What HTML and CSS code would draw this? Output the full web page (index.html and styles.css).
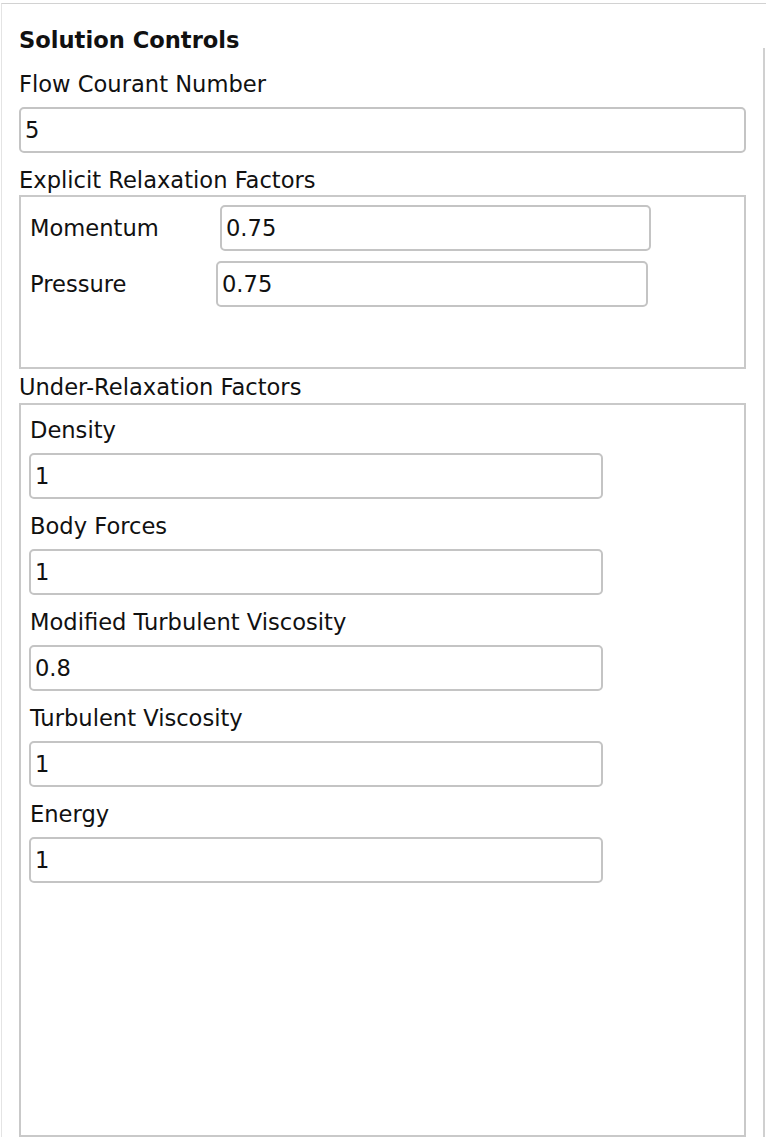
FILE: index.html
```html
<!DOCTYPE html>
<html>
<head>
<meta charset="utf-8">
<link rel="stylesheet" href="styles.css">
</head>
<body>
<div class="frame">
  <div class="panel">
    <div class="title">Solution Controls</div>
    <div class="label first">Flow Courant Number</div>
    <input class="field full" value="5">
    <div class="label group-label">Explicit Relaxation Factors</div>
    <div class="group explicit">
      <div class="row">
        <span class="row-label momentum-label">Momentum</span>
        <input class="field momentum" value="0.75">
      </div>
      <div class="row">
        <span class="row-label pressure-label">Pressure</span>
        <input class="field pressure" value="0.75">
      </div>
    </div>
    <div class="label group-label under-label">Under-Relaxation Factors</div>
    <div class="group under">
      <div class="label">Density</div>
      <input class="field urf" value="1">
      <div class="label">Body Forces</div>
      <input class="field urf" value="1">
      <div class="label">Modified Turbulent Viscosity</div>
      <input class="field urf" value="0.8">
      <div class="label">Turbulent Viscosity</div>
      <input class="field urf" value="1">
      <div class="label">Energy</div>
      <input class="field urf" value="1">
    </div>
  </div>
  <div class="rail"></div>
</div>
</body>
</html>
```
FILE: styles.css
```css
html, body {
  margin: 0;
  padding: 0;
  background: #ffffff;
}
body {
  font-family: "DejaVu Sans", Verdana, sans-serif;
  font-size: 22.6px;
  color: #111111;
  width: 766px;
  height: 1138px;
  overflow: hidden;
}
.frame {
  margin-top: 3px;
  margin-left: 1px;
  border-top: 1px solid #d2d2d2;
  border-left: 1px solid #e4e4e4;
  height: 1134px;
  display: flex;
  box-sizing: border-box;
}
.panel {
  flex: 1;
  padding: 23px 0 0 17px;
  display: flex;
  flex-direction: column;
  align-items: flex-start;
}
.rail {
  width: 0;
  margin-left: 17px;
  margin-right: 1px;
  margin-top: 44px;
  border-left: 2px solid #d0d0d0;
}
.title {
  font-weight: bold;
  line-height: 26px;
  height: 26px;
}
.label {
  line-height: 26px;
  height: 26px;
  white-space: nowrap;
}
.label.first {
  margin-top: 18px;
  margin-bottom: 10px;
}
.field {
  box-sizing: border-box;
  height: 46px;
  border: 2px solid #c4c4c4;
  border-radius: 5px;
  background: #ffffff;
  font-family: "DejaVu Sans", Verdana, sans-serif;
  font-size: 22.6px;
  color: #111111;
  padding: 0 0 0 4px;
  margin: 0;
  outline: none;
}
.full {
  width: 727px;
}
.group-label {
  margin-top: 14px;
}
.group {
  box-sizing: border-box;
  width: 727px;
  border: 2px solid #c9c9c9;
  margin-top: 2px;
}
.explicit {
  height: 174px;
  padding: 8px 0 0 8px;
  display: flex;
  flex-direction: column;
  gap: 10px;
}
.row {
  display: flex;
  align-items: center;
}
.row-label {
  padding-left: 1px;
}
.momentum-label {
  width: 190px;
}
.pressure-label {
  width: 186px;
}
.momentum {
  width: 431px;
}
.pressure {
  width: 432px;
}
.under-label {
  margin-top: 5px;
}
.under {
  margin-top: 3px;
  height: 734px;
  padding: 12px 0 0 8px;
  display: flex;
  flex-direction: column;
  align-items: flex-start;
}
.under .label {
  padding-left: 1px;
  margin-bottom: 10px;
}
.urf {
  width: 574px;
  margin-bottom: 14px;
}
```
